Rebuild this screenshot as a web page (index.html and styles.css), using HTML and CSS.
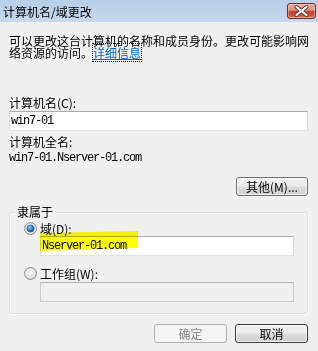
FILE: index.html
```html
<!DOCTYPE html>
<html lang="zh-CN">
<head>
<meta charset="utf-8">
<title>计算机名/域更改</title>
<link rel="stylesheet" href="styles.css">
</head>
<body>
<div class="window">
  <div class="titlebar">
    <span class="title">计算机名/域更改</span>
    <button class="close" aria-label="关闭">
      <svg width="27" height="14" viewBox="0 0 27 14">
        <path d="M8.5 3 L18.5 11 M18.5 3 L8.5 11" stroke="#6a2f2c" stroke-width="4" stroke-linecap="round"/>
        <path d="M8.5 3 L18.5 11 M18.5 3 L8.5 11" stroke="#ffffff" stroke-width="2.2" stroke-linecap="round"/>
      </svg>
    </button>
  </div>
  <div class="content">
    <p class="desc">可以更改这台计算机的名称和成员身份。更改可能影响网<br>络资源的访问。<a class="link" href="#">详细信息</a></p>
    <div class="label l1">计算机名(C):</div>
    <div class="input">win7-01</div>
    <div class="label l2">计算机全名:</div>
    <div class="mono fullname">win7-01.Nserver-01.com</div>
    <div class="row-right"><button class="btn more">其他(M)...</button></div>
    <div class="group">
      <div class="legend">隶属于</div>
      <div class="radio-row r1">
        <svg class="radio" width="13" height="13" viewBox="0 0 13 13">
          <defs>
            <radialGradient id="rgOn" cx="50%" cy="50%" r="50%">
              <stop offset="0" stop-color="#ffffff"/>
              <stop offset="0.7" stop-color="#ececec"/>
              <stop offset="1" stop-color="#cfcfcf"/>
            </radialGradient>
            <radialGradient id="dot" cx="40%" cy="35%" r="70%">
              <stop offset="0" stop-color="#a8dcff"/>
              <stop offset="0.45" stop-color="#2f8fd8"/>
              <stop offset="1" stop-color="#0d4a8a"/>
            </radialGradient>
          </defs>
          <circle cx="6.5" cy="6.5" r="6" fill="url(#rgOn)" stroke="#8e8f8f"/>
          <circle cx="6.5" cy="6.5" r="3.6" fill="url(#dot)" stroke="#1a4f82" stroke-width="0.6"/>
        </svg>
        <span>域(D):</span>
      </div>
      <div class="input sub">Nserver-01.com</div>
      <div class="radio-row r2">
        <svg class="radio" width="13" height="13" viewBox="0 0 13 13">
          <defs>
            <radialGradient id="rgOff" cx="45%" cy="40%" r="60%">
              <stop offset="0" stop-color="#f6f6f6"/>
              <stop offset="0.6" stop-color="#e2e2e2"/>
              <stop offset="1" stop-color="#c4c4c4"/>
            </radialGradient>
          </defs>
          <circle cx="6.5" cy="6.5" r="6" fill="url(#rgOff)" stroke="#8e8f8f"/>
          <circle cx="6.5" cy="6.5" r="4.3" fill="none" stroke="#f4f4f4" stroke-width="0.8"/>
        </svg>
        <span>工作组(W):</span>
      </div>
      <div class="input sub disabled"></div>
    </div>
    <div class="actions">
      <button class="btn ok" disabled>确定</button>
      <button class="btn cancel">取消</button>
    </div>
  </div>
  <span class="highlight"></span>
</div>
</body>
</html>
```
FILE: styles.css
```css
html, body {
  margin: 0;
  padding: 0;
  background: #f0f0f0;
}

body {
  font-family: "Noto Sans CJK SC", "Noto Sans", sans-serif;
  font-size: 12px;
  color: #000;
}

.window {
  position: relative;
  width: 318px;
  height: 351px;
  overflow: hidden;
  background: #f0f0f0;
}

.titlebar {
  height: 22px;
  background: linear-gradient(#b7cfe9, #c6d9ee);
  display: flex;
  justify-content: space-between;
  align-items: flex-start;
}

.title {
  margin: 6px 0 0 3px;
  line-height: 12px;
  font-size: 12px;
  white-space: nowrap;
}

.close {
  margin: 3px 2px 0 0;
  width: 29px;
  height: 16px;
  box-sizing: border-box;
  padding: 0;
  border: 1px solid #6e302c;
  border-radius: 3px;
  background: linear-gradient(#eab0a2 0%, #de8e7c 45%, #c7452e 52%, #c94c35 78%, #db8068 100%);
  box-shadow: inset 0 0 0 1px rgba(255, 220, 210, 0.45);
  display: flex;
  align-items: center;
  justify-content: center;
}

.close svg {
  display: block;
}

.content {
  padding: 0 10px 0 9px;
}

.desc {
  margin: 13px 0 0;
  line-height: 12px;
  white-space: nowrap;
}

.link {
  color: #0066cc;
  text-decoration: underline;
  outline: 1px dotted #000;
}

.label {
  line-height: 12px;
  white-space: nowrap;
}

.l1 {
  margin-top: 38px;
}

.l2 {
  margin-top: 5px;
}

.input {
  margin-top: 2px;
  height: 20px;
  box-sizing: border-box;
  border: 1px solid;
  border-color: #abadb3 #d5d9e0 #dfe3ea #d5d9e0;
  background: #fff;
  font-family: "Liberation Mono", monospace;
  font-size: 12px;
  letter-spacing: -1.2px;
  line-height: 18px;
  padding-left: 1px;
  white-space: nowrap;
}

.mono {
  font-family: "Liberation Mono", monospace;
  font-size: 12px;
  letter-spacing: -1.2px;
}

.fullname {
  margin-top: 4px;
  line-height: 12px;
}

.row-right {
  margin-top: 13px;
  display: flex;
  justify-content: flex-end;
}

.btn {
  width: 72px;
  height: 19px;
  box-sizing: border-box;
  padding: 0;
  border: 1px solid #707070;
  border-radius: 3px;
  background: linear-gradient(#f2f2f2 0%, #ebebeb 48%, #dddddd 52%, #cfcfcf 100%);
  box-shadow: inset 0 0 0 1px rgba(255, 255, 255, 0.7);
  font-family: "Noto Sans CJK SC", sans-serif;
  font-size: 12px;
  line-height: 17px;
  color: #000;
}

.group {
  margin-top: 16px;
  border: 1px solid #d5dfe5;
  border-radius: 3px;
  box-shadow: inset 1px 1px 0 #ffffff, 1px 1px 0 #ffffff;
  padding: 0 13px 11px 0;
}

.legend {
  margin: -7px 0 0 5px;
  padding: 0 2px;
  width: max-content;
  background: #f0f0f0;
  line-height: 12px;
}

.radio-row {
  display: flex;
  align-items: center;
  gap: 3px;
  margin-left: 14px;
  height: 13px;
  line-height: 12px;
  white-space: nowrap;
}

.radio {
  display: block;
  flex: none;
}

.r1 {
  margin-top: 4px;
}

.r2 {
  margin-top: 11px;
}

.sub {
  margin-left: 30px;
}

.r1 + .sub {
  margin-top: 1px;
}

.disabled {
  background: #f0f0f0;
  border-color: #b1b4b9 #c9ccd1 #c9ccd1 #c9ccd1;
}

.actions {
  margin-top: 10px;
  display: flex;
  justify-content: flex-end;
  gap: 8px;
}

.actions .btn {
  width: 73px;
}

.ok {
  border-color: #adb2b5;
  background: #f4f4f4;
  box-shadow: none;
  color: #838383;
}

.cancel {
  border-color: #3c3c3c;
}

.highlight {
  position: absolute;
  left: 40px;
  top: 231px;
  width: 98px;
  height: 20px;
  background: #ffff00;
  mix-blend-mode: multiply;
  clip-path: polygon(0 2px, 100% 0, 100% 17px, 0 20px);
}
```
